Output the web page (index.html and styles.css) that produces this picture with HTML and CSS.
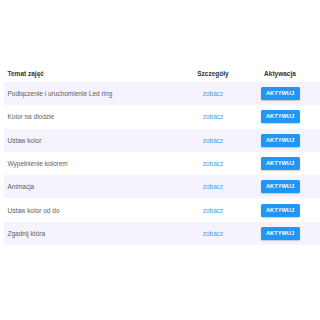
FILE: index.html
```html
<!DOCTYPE html>
<html lang="pl">
<head>
<meta charset="utf-8">
<link rel="stylesheet" href="styles.css">
</head>
<body>
<div class="wrap">
<table class="lessons">
<thead>
<tr><th class="c1">Temat zajęć</th><th class="c2">Szczegóły</th><th class="c3">Aktywacja</th></tr>
</thead>
<tbody>
<tr><td class="c1">Podłączenie i uruchomienie Led ring</td><td class="c2"><a class="link">zobacz</a></td><td class="c3"><button class="btn">AKTYWUJ</button></td></tr>
<tr><td class="c1">Kolor na diodzie</td><td class="c2"><a class="link">zobacz</a></td><td class="c3"><button class="btn">AKTYWUJ</button></td></tr>
<tr><td class="c1">Ustaw kolor</td><td class="c2"><a class="link">zobacz</a></td><td class="c3"><button class="btn">AKTYWUJ</button></td></tr>
<tr><td class="c1">Wypełnienie kolorem</td><td class="c2"><a class="link">zobacz</a></td><td class="c3"><button class="btn">AKTYWUJ</button></td></tr>
<tr><td class="c1">Animacja</td><td class="c2"><a class="link">zobacz</a></td><td class="c3"><button class="btn">AKTYWUJ</button></td></tr>
<tr><td class="c1">Ustaw kolor od do</td><td class="c2"><a class="link">zobacz</a></td><td class="c3"><button class="btn">AKTYWUJ</button></td></tr>
<tr><td class="c1">Zgadnij która</td><td class="c2"><a class="link">zobacz</a></td><td class="c3"><button class="btn">AKTYWUJ</button></td></tr>
</tbody>
</table>
</div>
</body>
</html>
```
FILE: styles.css
```css
html, body {
  margin: 0;
  padding: 0;
  background: #ffffff;
}
body {
  font-family: "Liberation Sans", Arial, sans-serif;
  width: 320px;
  height: 320px;
  overflow: hidden;
}
.wrap {
  padding: 64px 0 0 4px;
}
.lessons {
  border-collapse: collapse;
  border-spacing: 0;
  width: 316px;
  table-layout: fixed;
}
.lessons th, .lessons td {
  padding: 0;
  vertical-align: middle;
}
.lessons th {
  height: 18px;
  font-size: 6.5px;
  font-weight: bold;
  color: #333333;
  text-align: center;
}
.lessons td {
  height: 23.3px;
  font-size: 6.5px;
  color: #606060;
  text-align: center;
}
.lessons .c1 {
  width: 178.5px;
  text-align: left;
  padding-left: 3.5px;
}
.lessons .c2 {
  width: 54px;
}
.lessons .c3 {
  width: 80px;
}
.lessons tbody tr:nth-child(odd) {
  background: #f5f3fd;
}
.link {
  color: #3f9ff0;
  cursor: pointer;
}
.btn {
  font-family: "Liberation Sans", Arial, sans-serif;
  font-size: 5.7px;
  font-weight: bold;
  color: #ffffff;
  background: #2196f3;
  border: none;
  border-radius: 1.5px;
  height: 13px;
  width: 39px;
  padding: 0;
  line-height: 13px;
  box-shadow: 0 1px 1.5px rgba(0,0,0,0.2);
  display: inline-block;
  vertical-align: middle;
}
```
